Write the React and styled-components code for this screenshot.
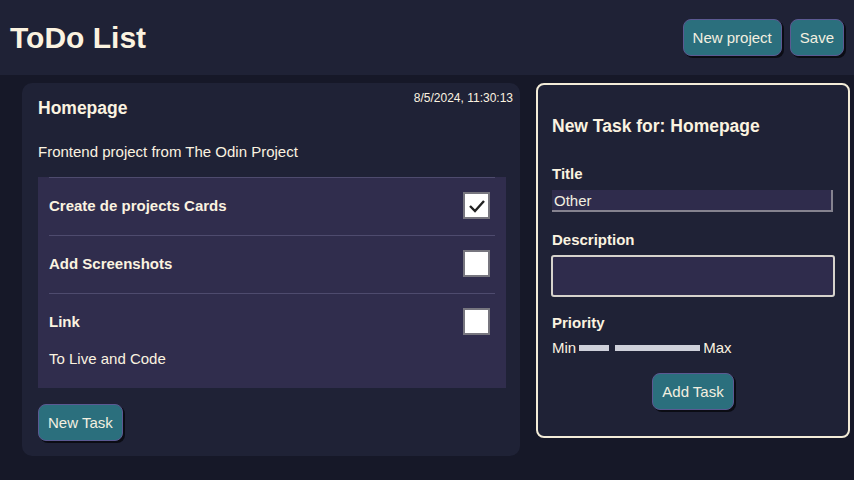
import { createGlobalStyle, styled } from "styled-components";

const GlobalStyle = createGlobalStyle`
	* { box-sizing: border-box; }
	body {
		margin: 0;
		background-color: #161828;
		color: #fbf3e0;
		font-family: "Liberation Sans", Arial, sans-serif;
	}
`;

const tasks = [
	{ title: "Create de projects Cards", done: true },
	{ title: "Add Screenshots", done: false },
	{ title: "Link", done: false, description: "To Live and Code" },
];

function App() {
	return (
		<>
			<GlobalStyle />
			<StyledHeader>
				<StyledTitle>ToDo List</StyledTitle>
				<StyledActions>
					<StyledButton>New project</StyledButton>
					<StyledButton>Save</StyledButton>
				</StyledActions>
			</StyledHeader>
			<StyledMain>
				<StyledCard>
					<StyledCardTop>
						<StyledCardTitle>Homepage</StyledCardTitle>
						<StyledDate>8/5/2024, 11:30:13</StyledDate>
					</StyledCardTop>
					<StyledCardText>Frontend project from The Odin Project</StyledCardText>
					<StyledTaskList>
						{tasks.map((task) => (
							<StyledTask key={task.title}>
								<StyledTaskRow>
									<StyledTaskTitle>{task.title}</StyledTaskTitle>
									<StyledCheck>
										{task.done && (
											<svg width="18" height="14" viewBox="0 0 18 14">
												<path d="M2 7 L7 12 L16 2" fill="none" stroke="#222" strokeWidth="2.4" />
											</svg>
										)}
									</StyledCheck>
								</StyledTaskRow>
								{task.description && <StyledTaskText>{task.description}</StyledTaskText>}
							</StyledTask>
						))}
					</StyledTaskList>
					<StyledButton>New Task</StyledButton>
				</StyledCard>
				<StyledForm>
					<StyledFormTitle>New Task for: Homepage</StyledFormTitle>
					<StyledLabel>Title</StyledLabel>
					<StyledInput defaultValue="Other" />
					<StyledLabel>Description</StyledLabel>
					<StyledTextArea />
					<StyledLabel>Priority</StyledLabel>
					<StyledRange>
						<span>Min</span>
						<StyledTrack $width={30} />
						<StyledThumb />
						<StyledTrack $width={85} />
						<span>Max</span>
					</StyledRange>
					<StyledFormFooter>
						<StyledButton>Add Task</StyledButton>
					</StyledFormFooter>
				</StyledForm>
			</StyledMain>
		</>
	);
}

const StyledHeader = styled.header`
	display: flex;
	align-items: center;
	justify-content: space-between;
	height: 75px;
	padding: 0 10px;
	background-color: #1f2236;
`;
const StyledTitle = styled.h1`
	margin: 0;
	font-size: 30px;
	font-weight: bold;
`;
const StyledActions = styled.div`
	display: flex;
	gap: 8px;
`;
const StyledButton = styled.button`
	padding: 9px 9px;
	background-color: #2b6f7d;
	color: #f3efe0;
	font-family: inherit;
	font-size: 15px;
	line-height: 17px;
	border: 1px solid #5b5992;
	border-radius: 8px;
	box-shadow: 2px 2px 0 #0b0c14;
	cursor: pointer;
`;
const StyledMain = styled.main`
	display: grid;
	grid-template-columns: 498px 314px;
	gap: 16px;
	align-items: start;
	padding: 8px 0 0 22px;
`;
const StyledCard = styled.section`
	display: flex;
	flex-direction: column;
	align-items: flex-start;
	padding: 14px 14px 15px 16px;
	background-color: #1f2236;
	border-radius: 10px;
`;
const StyledCardTop = styled.div`
	display: flex;
	justify-content: space-between;
	align-self: stretch;
	margin-top: -6px;
`;
const StyledCardTitle = styled.h2`
	margin: 6px 0 0;
	font-size: 17.5px;
	font-weight: bold;
	line-height: 22px;
`;
const StyledDate = styled.span`
	font-size: 12px;
	margin-right: -7px;
`;
const StyledCardText = styled.p`
	margin: 24px 0 16px;
	font-size: 15px;
	line-height: 18px;
`;
const StyledTaskList = styled.ul`
	align-self: stretch;
	margin: 0 0 16px;
	padding: 0 11px 5px;
	list-style: none;
	background-color: #302d4d;
	width: 468px;
`;
const StyledTask = styled.li`
	border-top: 1px solid #4e4b6e;
	padding: 14px 0 16px;
`;
const StyledTaskRow = styled.div`
	display: flex;
	justify-content: space-between;
	align-items: center;
	padding-right: 5px;
`;
const StyledTaskTitle = styled.span`
	font-size: 15px;
	font-weight: bold;
`;
const StyledCheck = styled.span`
	display: flex;
	align-items: center;
	justify-content: center;
	width: 27px;
	height: 27px;
	background-color: #fff;
	border: 2px solid #77767f;
`;
const StyledTaskText = styled.p`
	margin: 15px 0 0;
	font-size: 15px;
	line-height: 17px;
`;
const StyledForm = styled.form`
	display: flex;
	flex-direction: column;
	padding: 31px 14px 26px 14px;
	border: 2px solid #f3ecd8;
	border-radius: 8px;
	background-color: #1f2236;
`;
const StyledFormTitle = styled.h2`
	margin: 0 0 28px;
	font-size: 17.5px;
	font-weight: bold;
`;
const StyledLabel = styled.label`
	font-size: 15px;
	font-weight: bold;
	margin-bottom: 7px;
`;
const StyledInput = styled.input`
	width: 281px;
	height: 22px;
	margin: 1px 0 19px;
	padding: 0 2px;
	background-color: #2f2c4c;
	color: #f3efe0;
	font-family: inherit;
	font-size: 15px;
	border: none;
	border-right: 2px solid #85838f;
	border-bottom: 2px solid #85838f;
`;
const StyledTextArea = styled.textarea`
	width: 284px;
	height: 42px;
	margin: 0 0 17px -1px;
	background-color: #2f2c4c;
	border: 2px solid #d6d3cc;
	border-radius: 3px;
	resize: none;
`;
const StyledRange = styled.div`
	display: flex;
	align-items: center;
	gap: 3px;
	margin-top: 1px;
	font-size: 15px;
`;
const StyledTrack = styled.span`
	width: ${(p) => p.$width}px;
	height: 6px;
	background-color: #ced0da;
`;
const StyledThumb = styled.span`
	width: 0;
`;
const StyledFormFooter = styled.div`
	display: flex;
	justify-content: center;
	margin-top: 17px;
`;

export default App;
